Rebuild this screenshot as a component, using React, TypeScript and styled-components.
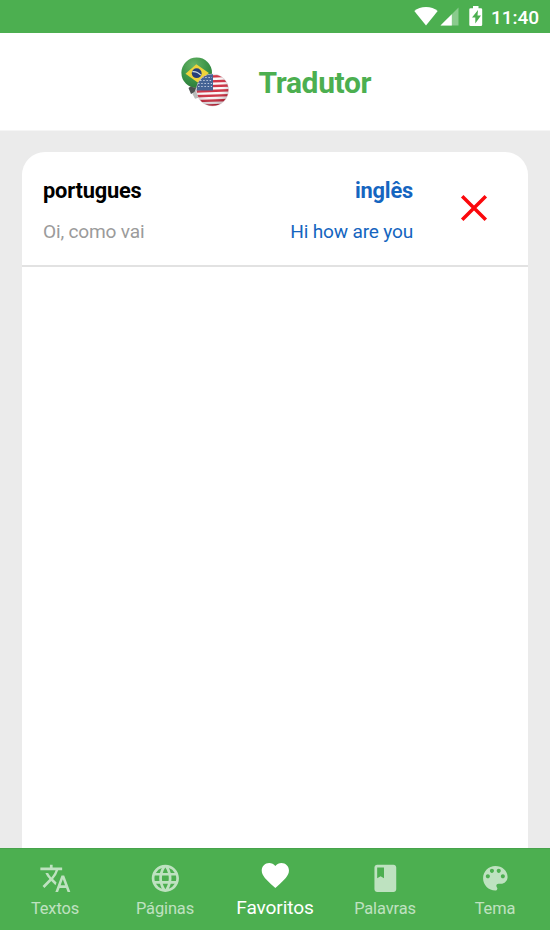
import React from 'react';
import styled, { createGlobalStyle } from 'styled-components';
import { MdTranslate, MdLanguage, MdFavorite, MdBook } from 'react-icons/md';

const GlobalStyle = createGlobalStyle`
  * { box-sizing: border-box; }
  body { margin: 0; font-family: Roboto, sans-serif; background: #ebebeb; }
  button { border: 0; padding: 0; background: none; font: inherit; color: inherit; }
  svg { display: block; flex: none; }
`;

const Screen = styled.div`
  display: flex;
  flex-direction: column;
  width: 550px;
  height: 930px;
  overflow: hidden;
  background: #ebebeb;
`;

const StatusBar = styled.div`
  display: flex;
  justify-content: flex-end;
  align-items: center;
  height: 33px;
  padding-right: 11px;
  background: #4caf50;
  color: #fff;
`;

const Clock = styled.span`
  font-size: 19.1px;
  font-weight: 500;
  line-height: 33px;
  letter-spacing: -0.1px;
  margin-left: 8.5px;
  padding-top: 1px;
`;

const Header = styled.header`
  display: flex;
  align-items: center;
  height: 98px;
  padding-left: 179px;
  background: #fff;
  border-bottom: 1px solid #f5f5f5;
`;

const Title = styled.h1`
  margin: 2px 0 0 26.5px;
  color: #4caf50;
  font-size: 30px;
  font-weight: 700;
  line-height: 36px;
  letter-spacing: -0.35px;
`;

const Content = styled.main`
  display: flex;
  flex: 1;
  padding: 21px 22px 0;
`;

const Card = styled.section`
  flex: 1;
  background: #fff;
  border-radius: 23px 23px 0 0;
`;

const FavoriteRow = styled.article`
  display: flex;
  height: 115px;
  padding-left: 21px;
  border-bottom: 2px solid #e2e2e2;
`;

const Phrase = styled.div<{ $end?: boolean }>`
  flex: 1;
  display: flex;
  flex-direction: column;
  align-items: ${(p) => (p.$end ? 'flex-end' : 'flex-start')};
  padding-top: 26px;
  gap: 15px;
`;

const Language = styled.strong<{ $color: string }>`
  color: ${(p) => p.$color};
  font-size: 21.8px;
  font-weight: 700;
  line-height: 26px;
  letter-spacing: -0.2px;
`;

const Sentence = styled.span<{ $color: string }>`
  color: ${(p) => p.$color};
  font-size: 19.1px;
  line-height: 26px;
  letter-spacing: -0.19px;
`;

const RemoveButton = styled.button`
  display: flex;
  align-items: center;
  justify-content: center;
  width: 115px;
  padding: 0 0 2px 6px;
  color: #fb080c;
`;

const BottomNav = styled.nav`
  display: grid;
  grid-template-columns: repeat(5, 1fr);
  height: 82px;
  background: #4caf50;
  border-top: 1px solid #47a34b;
`;

const Tab = styled.button<{ $active: boolean }>`
  display: flex;
  flex-direction: column;
  align-items: center;
  padding: ${(p) => (p.$active ? 10 : 13)}px 0 0;
  color: #fff;

  svg { opacity: ${(p) => (p.$active ? 1 : 0.64)}; }
`;

const TabLabel = styled.span<{ $active: boolean }>`
  margin-top: ${(p) => (p.$active ? 5 : 3.3)}px;
  font-size: ${(p) => (p.$active ? 19.1 : 16.4)}px;
  line-height: 22px;
  letter-spacing: -0.1px;
  opacity: ${(p) => (p.$active ? 1 : 0.64)};
`;

function StatusIcons() {
  return (
    <svg width="70" height="33" viewBox="413 0 70 33" fill="#fff">
      <path d="M426 25.5 414.3 11Q419 7 426 7t11.7 4z" />
      <path d="M458.5 7.5v18h-18z" opacity=".35" />
      <path d="M451.8 14.2v11.3h-11.3z" />
      <path
        fillRule="evenodd"
        d="M473 6h5.5v2.2h2.4q1.3 0 1.3 1.3v15.2q0 1.3-1.3 1.3h-10.3q-1.3 0-1.3-1.3V9.5q0-1.3 1.3-1.3H473zM478 10l-6 7.600h3.300v6l5.700-8.200h-3.500z"
      />
    </svg>
  );
}

function FlagsLogo() {
  return (
    <svg width="53" height="54" viewBox="179 55 53 54">
      <defs>
        <radialGradient id="brazil" cx=".4" cy=".25" r=".8">
          <stop offset="0" stopColor="#68b466" />
          <stop offset=".55" stopColor="#3c9548" />
          <stop offset="1" stopColor="#2a7a38" />
        </radialGradient>
        <radialGradient id="shade" cx=".45" cy=".35" r=".62">
          <stop offset=".55" stopColor="#fff" stopOpacity=".08" />
          <stop offset="1" stopColor="#402030" stopOpacity=".25" />
        </radialGradient>
        <clipPath id="usa"><circle cx="212.5" cy="90" r="15.8" /></clipPath>
      </defs>
      <circle cx="196.7" cy="72.8" r="15.3" fill="url(#brazil)" />
      <path d="m185.500 73.800 10.800-9.600 12.600 8.800-11.200 9.500z" fill="#efd33b" />
      <circle cx="196.700" cy="73.200" r="4.900" fill="#263f78" />
      <path d="M192.400 71.600q4.800-.5 8.500 3.600" fill="none" stroke="#c9dbe2" strokeWidth="1.200" />
      <path d="m188.500 88 2-1.500 5.500 1.500-1 4-4 2z" fill="#4c5150" />
      <path d="m192.500 94 3-3.500 4 7-4.500 1.200z" fill="#b9bcba" />
      <circle cx="212.500" cy="90" r="16.300" fill="#d7cdd0" />
      <g clipPath="url(#usa)">
        <path fill="#fbf9f9" d="M196 73h34v34h-34z" />
        <path d="M194 76.500h38M194 81.300h38M194 86.100h38M194 90.900h38M194 95.700h38M194 100.500h38M194 105.300h38" stroke="#cb2638" strokeWidth="2.400" transform="rotate(-2 212.500 90)" />
        <path d="M196 73h17v17.500H196z" fill="#35578c" />
        <path d="M202 77.500h10M200 80.500h12M198 83.500h14M198 86.500h14" stroke="#b9c6dc" strokeWidth="1.100" strokeDasharray="1.500 1.700" />
      </g>
      <circle cx="212.500" cy="90" r="15.800" fill="url(#shade)" />
    </svg>
  );
}

function CrossIcon() {
  return (
    <svg width="28" height="28" viewBox="0 0 28 28" fill="none" stroke="currentColor" strokeWidth="3.500">
      <path d="m2.200 2.200 23.600 23.600M25.800 2.200 2.200 25.800" />
    </svg>
  );
}

function PaletteIcon({ size }: { size: number }) {
  return (
    <svg width={size} height={size} viewBox="0 0 24 24" fill="currentColor">
      <path d="M12 3c-4.970 0-9 4.030-9 9s4.030 9 9 9c.83 0 1.500-.67 1.500-1.500 0-.39-.15-.74-.39-1.010-.23-.26-.38-.61-.38-.99 0-.83.67-1.500 1.500-1.500H16c2.760 0 5-2.240 5-5 0-4.420-4.030-8-9-8zm-5.500 9c-.83 0-1.500-.67-1.500-1.500S5.670 9 6.500 9 8 9.670 8 10.500 7.330 12 6.500 12zm3-4C8.670 8 8 7.330 8 6.500S8.670 5 9.500 5s1.500.67 1.500 1.500S10.330 8 9.500 8zm5 0c-.83 0-1.500-.67-1.500-1.500S13.670 5 14.500 5s1.500.67 1.500 1.500S15.330 8 14.500 8zm3 4c-.83 0-1.500-.67-1.500-1.500S16.670 9 17.500 9s1.500.67 1.500 1.500-.67 1.500-1.500 1.500z" />
    </svg>
  );
}

const tabs = [
  { label: 'Textos', Icon: MdTranslate },
  { label: 'Páginas', Icon: MdLanguage },
  { label: 'Favoritos', Icon: MdFavorite },
  { label: 'Palavras', Icon: MdBook },
  { label: 'Tema', Icon: PaletteIcon },
];

export default function App() {
  return (
    <>
      <GlobalStyle />
      <Screen>
        <StatusBar>
          <StatusIcons />
          <Clock>11:40</Clock>
        </StatusBar>
        <Header>
          <FlagsLogo />
          <Title>Tradutor</Title>
        </Header>
        <Content>
          <Card>
            <FavoriteRow>
              <Phrase>
                <Language $color="#000">portugues</Language>
                <Sentence $color="#9b9b9b">Oi, como vai</Sentence>
              </Phrase>
              <Phrase $end>
                <Language $color="#1565c0">inglês</Language>
                <Sentence $color="#1565c0">Hi how are you</Sentence>
              </Phrase>
              <RemoveButton aria-label="Remover">
                <CrossIcon />
              </RemoveButton>
            </FavoriteRow>
          </Card>
        </Content>
        <BottomNav>
          {tabs.map(({ label, Icon }) => {
            const active = label === 'Favoritos';
            return (
              <Tab key={label} $active={active}>
                <Icon size={32.7} />
                <TabLabel $active={active}>{label}</TabLabel>
              </Tab>
            );
          })}
        </BottomNav>
      </Screen>
    </>
  );
}
